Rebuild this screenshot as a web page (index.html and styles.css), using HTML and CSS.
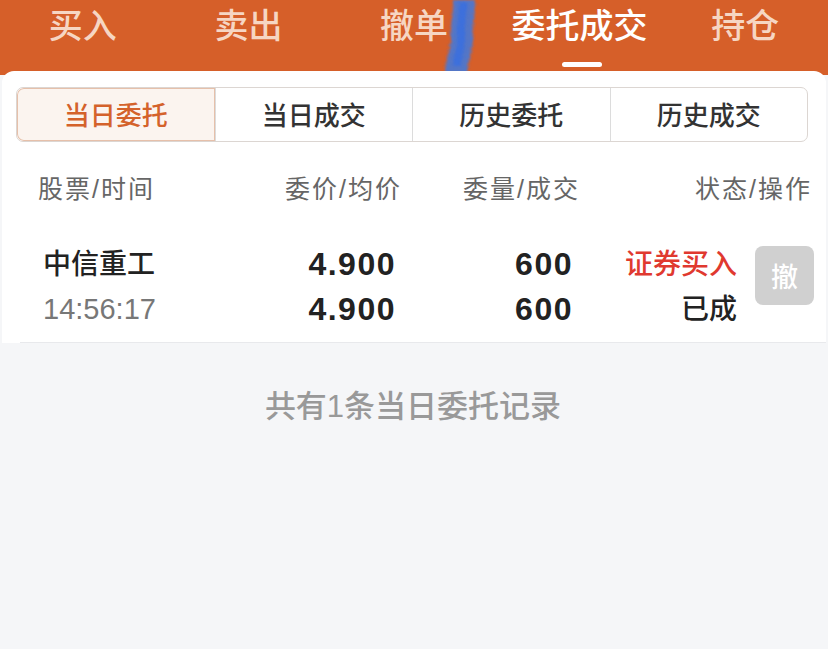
FILE: index.html
```html
<!DOCTYPE html>
<html lang="zh-CN">
<head>
  <meta charset="UTF-8">
  <title>委托成交</title>
  <link rel="stylesheet" href="styles.css">
</head>
<body>
  <div class="topbar">
    <div class="tab">买入</div>
    <div class="tab">卖出</div>
    <div class="tab">撤单</div>
    <div class="tab active">委托成交</div>
    <div class="tab">持仓</div>
    <svg class="scribble" width="44" height="74" viewBox="0 0 44 74">
      <defs>
        <filter id="rough" filterUnits="userSpaceOnUse" x="0" y="0" width="44" height="74">
          <feTurbulence type="fractalNoise" baseFrequency="0.9" numOctaves="2" result="n"/>
          <feDisplacementMap in="SourceGraphic" in2="n" scale="6"/>
          <feGaussianBlur stdDeviation="0.8"/>
        </filter>
      </defs>
      <path d="M28 -4 C29 12 25 24 26 36 C27 48 21 56 20 72" stroke="#4a78d4" stroke-width="22" fill="none" stroke-linecap="round" opacity="0.92" filter="url(#rough)"/>
      <path d="M27 2 C27 16 24 28 25 40 C25 50 21 58 21 66" stroke="#3c6fdc" stroke-width="8" fill="none" filter="url(#rough)"/>
    </svg>
  </div>

  <div class="card">
    <div class="seg">
      <div class="seg-item on">当日委托</div>
      <div class="seg-item">当日成交</div>
      <div class="seg-item">历史委托</div>
      <div class="seg-item">历史成交</div>
    </div>

    <div class="thead">
      <div class="c1">股票/时间</div>
      <div class="c2">委价/均价</div>
      <div class="c3">委量/成交</div>
      <div class="c4">状态/操作</div>
    </div>

    <div class="row">
      <div class="c1">
        <div class="name">中信重工</div>
        <div class="time">14:56:17</div>
      </div>
      <div class="c2 num">
        <div>4.900</div>
        <div>4.900</div>
      </div>
      <div class="c3 num">
        <div>600</div>
        <div>600</div>
      </div>
      <div class="c4">
        <div class="status">
          <div class="buy">证券买入</div>
          <div>已成</div>
        </div>
        <button class="cancel">撤</button>
      </div>
    </div>
  </div>

  <div class="empty">共有1条当日委托记录</div>
</body>
</html>
```

FILE: styles.css
```css
* { box-sizing: border-box; }
html, body { margin: 0; padding: 0; }
body {
  width: 828px;
  height: 649px;
  overflow: hidden;
  background: #f5f6f8;
  font-family: "Liberation Sans", "Noto Sans CJK SC", sans-serif;
  color: #222;
}

.topbar {
  position: relative;
  height: 75px;
  background: #d65f29;
  display: grid;
  grid-template-columns: repeat(5, 1fr);
  align-items: start;
}
.tab {
  text-align: center;
  font-size: 34px;
  font-weight: 500;
  line-height: 40px;
  padding-top: 6px;
  color: #f6d6c3;
}
.tab.active { color: #fff; position: relative; }
.tab.active::after {
  content: "";
  position: absolute;
  left: 50%;
  top: 62px;
  width: 40px;
  height: 5px;
  margin-left: -18px;
  border-radius: 3px;
  background: #fff;
}
.scribble { position: absolute; left: 436px; top: 0; }

.card {
  margin: -4px 2px 0;
  position: relative;
  background: #fff;
  border-radius: 12px 12px 0 0;
  padding-top: 16px;
}

.seg {
  margin: 0 18px 0 14px;
  height: 55px;
  display: grid;
  grid-template-columns: repeat(4, 1fr);
  border: 1px solid #dcd6d2;
  border-radius: 7px;
  overflow: hidden;
}
.seg-item {
  display: flex;
  align-items: center;
  justify-content: center;
  font-size: 26px;
  font-weight: 500;
  color: #333;
  border-left: 1px solid #dcdcdc;
  padding-bottom: 3px;
}
.seg-item:first-child { border-left: none; }
.seg-item.on {
  color: #d4622b;
  background: #fbf4ef;
  box-shadow: inset 0 0 0 1px #e6c0aa;
  border-radius: 7px 0 0 7px;
}

.thead, .row {
  display: grid;
  grid-template-columns: 162px 200px 178px 1fr;
  padding-left: 36px;
}
.thead {
  height: 94px;
  align-items: center;
  font-size: 25px;
  letter-spacing: 2px;
  color: #666;
  padding-bottom: 4px;
}
.thead .c2, .thead .c3 { text-align: right; margin-right: -2px; }
.thead .c4 { text-align: right; padding-right: 14px; }

.row {
  height: 107px;
  border-bottom: 1px solid #e8e9ec;
  margin-left: 18px;
  padding-left: 18px;
  padding-top: 6px;
}
.row > div > div { height: 45px; line-height: 45px; }
.name { font-size: 28px; font-weight: 500; padding-left: 5px; color: #222; }
.time { font-size: 29px; padding-left: 5px; color: #777; }
.num {
  font-size: 32px;
  font-weight: bold;
  letter-spacing: 1.5px;
  text-align: right;
  color: #222;
}
.row .c2 { padding-right: 4px; }
.row .c3 { padding-right: 5px; }
.row .c4 {
  display: flex;
  justify-content: flex-end;
  align-items: flex-start;
  padding-right: 12px;
}
.status { font-size: 28px; font-weight: 500; text-align: right; color: #222; }
.buy { color: #e0392f; }
.cancel {
  margin: 4px 0 0 18px;
  width: 59px;
  height: 59px;
  border: none;
  border-radius: 8px;
  background: #d0d0d0;
  color: #fff;
  font-family: "Noto Sans CJK SC", sans-serif;
  font-size: 27px;
  font-weight: 500;
  padding: 0;
}

.empty {
  text-align: center;
  font-size: 31px;
  font-weight: 500;
  color: #999;
  padding-top: 38px;
  padding-right: 2px;
}
```
